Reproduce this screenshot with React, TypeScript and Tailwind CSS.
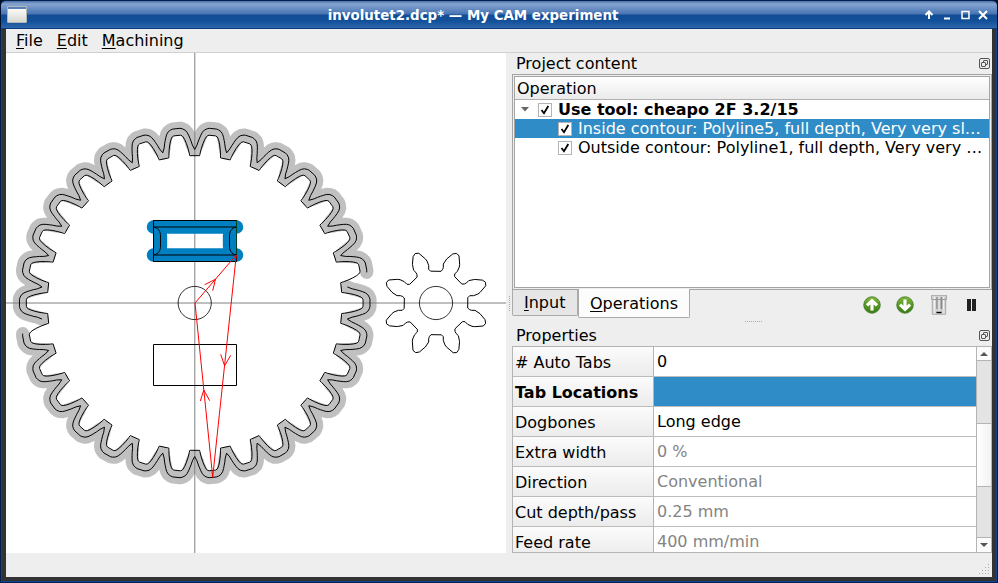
import React from "react";

type Polar = [number, number];

const CX = 194.7;
const CY = 303;

function polar(r: number, deg: number): string {
  const a = (deg * Math.PI) / 180;
  return `${(CX + r * Math.sin(a)).toFixed(2)},${(CY - r * Math.cos(a)).toFixed(2)}`;
}

// Half tooth profiles: [radius, angle from the tooth's axis], root first.
const toothProfile: Polar[] = [[147.4, 4.1], [150, 3.9], [155, 3.5], [160, 2.98], [164, 2.45], [166.5, 2], [167.7, 1.65], [168.4, 1.1]];
const cutProfile: Polar[] = [[153.5, 6], [158, 5.15], [162, 4.7], [165, 4.3], [168, 3.9], [171, 3.4], [173.3, 2.75], [174.7, 1.9], [175.3, 1.2]];

function tooth(profile: Polar[], axis: number): string[] {
  const rising = profile.map(([r, a]) => polar(r, axis - a));
  const falling = [...profile].reverse().map(([r, a]) => polar(r, axis + a));
  return [...rising, ...falling];
}

const gearOutline = Array.from({ length: 30 }, (_, i) => tooth(toothProfile, 6 + 12 * i)).flat().join(" ");

// Half of the cut, from the valley at `start` to the holding tab 14 teeth later.
function cutPath(start: number): string {
  const pts: string[] = [];
  for (let i = 0; i < 14; i++) pts.push(...tooth(cutProfile, start + 6 + 12 * i));
  const last = start + 6 + 12 * 14;
  pts.push(...cutProfile.map(([r, a]) => polar(r, last - a)));
  pts.push(polar(175.2, last + 1.2), polar(174.7, last + 1.9));
  return pts.join(" ");
}
const cuts = [cutPath(84), cutPath(264)];

const pinionTooth: Polar[] = [[15, -95], [20, -101], [22, -107], [22, -117], [32, -132], [50, -147], [61, -149], [69, -142], [71, -116], [70, -108], [64, -95], [56, -87], [56, -79]];
const pinion = Array.from({ length: 8 }, (_, i) => {
  const a = (i * Math.PI) / 4;
  return pinionTooth.map(([x, y]) => {
    const px = 436 + (x * Math.cos(a) - y * Math.sin(a)) / 3;
    const py = 303 + (x * Math.sin(a) + y * Math.cos(a)) / 3;
    return `${px.toFixed(2)},${py.toFixed(2)}`;
  });
}).flat().join(" ");

const pocket = "M153.5 227H236.5M236.5 227C231 228 229.5 232 229.5 236V246C229.5 250 231 254 236.5 255M236.5 255H153.5M153.5 255C159 254 160.5 250 160.5 246V236C160.5 232 159 228 153.5 227";

function Drawing() {
  return (
    <svg className="block h-[500px] w-[500px] shrink-0 bg-white" viewBox="6 53 500 500" fill="none">
      {cuts.map((c) => (
        <polyline key={c} points={c} stroke="#c0c0c0" strokeWidth="13.2" strokeLinecap="round" strokeLinejoin="round" />
      ))}
      <path d="M6 303H506M194.8 53V553" stroke="#808080" />
      <path d={pocket} stroke="#0080c0" strokeWidth="13.4" strokeLinecap="round" strokeLinejoin="round" />
      <path d={pocket} stroke="#000" />
      {cuts.map((c) => (
        <polyline key={c} points={c} stroke="#000" strokeWidth="1" />
      ))}
      <polygon points={gearOutline} stroke="#000" strokeWidth="1" />
      <polygon points={pinion} stroke="#000" strokeWidth="1" />
      <path d="M153.5 220.5H236.5V261.5H153.5ZM153.5 344.5H236.5V385.5H153.5Z" stroke="#000" />
      <path d="M236.5 221V255" stroke="#004020" />
      <circle cx="194.7" cy="303" r="16.6" stroke="#000" strokeWidth=".8" />
      <circle cx="436" cy="303" r="16.6" stroke="#000" strokeWidth=".8" />
      <path
        d="M195 303L236.3 255L212.7 477.2L195 303M204.7 284.7L215.5 279.2L212.7 290.7M220.7 354.3L224.6 365.8L230.7 355.3M200.3 401L203.8 390L209.7 400.7"
        stroke="#f00"
      />
    </svg>
  );
}

function DockTitle({ children }: { children: React.ReactNode }) {
  return (
    <div className="flex h-[21px] items-center justify-between pl-1 pr-[2px]">
      <span>{children}</span>
      <svg width="11" height="11" viewBox="0 0 11 11" fill="none" stroke="#555">
        <rect x=".5" y=".5" width="10" height="10" rx="1.5" />
        <rect x="4.5" y="2.5" width="4" height="4" rx=".5" />
        <rect x="2.5" y="4.5" width="4" height="4" rx=".5" fill="#eee" />
      </svg>
    </div>
  );
}

function Check() {
  return (
    <span className="flex h-[14px] w-[14px] shrink-0 items-center justify-center border border-[#b4b4b4] bg-white">
      <svg width="10" height="10" viewBox="0 0 10 10" fill="none" stroke="#000" strokeWidth="1.8">
        <path d="M1.5 5L4 8.2L8.3 1" />
      </svg>
    </span>
  );
}

function Arrow({ up }: { up?: boolean }) {
  return (
    <svg width="18" height="18" viewBox="0 0 18 18">
      <defs>
        <linearGradient id="leaf" x2="0" y2="1">
          <stop stopColor="#7db83a" />
          <stop offset="1" stopColor="#357a14" />
        </linearGradient>
      </defs>
      <circle cx="9" cy="9" r="8.3" fill="url(#leaf)" stroke="#3b711c" strokeWidth=".7" />
      <path
        transform={up ? undefined : "rotate(180 9 9)"}
        d="M9 5V14.5M4 9.3L9 4.6L14 9.3"
        fill="none"
        stroke="#fff"
        strokeWidth="3.2"
      />
    </svg>
  );
}

function Trash() {
  return (
    <svg width="16" height="20" viewBox="0 0 16 20">
      <defs>
        <linearGradient id="can">
          <stop stopColor="#bbb" />
          <stop offset=".2" stopColor="#fafafa" />
          <stop offset=".35" stopColor="#888" />
          <stop offset=".5" stopColor="#f4f4f4" />
          <stop offset=".68" stopColor="#888" />
          <stop offset=".82" stopColor="#f2f2f2" />
          <stop offset="1" stopColor="#aaa" />
        </linearGradient>
      </defs>
      <path d="M1 2H15L14.5 19H1.5Z" fill="url(#can)" />
      <path d="M1 14H15V19H1Z" fill="#ddd" opacity=".75" />
      <path d="M0 .8H16M.5 4.5H15.5" stroke="#999" />
      <path d="M.5 1V4.5M15.5 1V4.5M1.3 4V19.3H14.7V4" fill="none" stroke="#aaa" />
      <path d="M5.5 17.5H10.5" stroke="#000" strokeWidth="1.4" />
    </svg>
  );
}

const properties = [
  { name: "# Auto Tabs", value: "0" },
  { name: "Tab Locations", value: "", selected: true },
  { name: "Dogbones", value: "Long edge" },
  { name: "Extra width", value: "0 %", muted: true },
  { name: "Direction", value: "Conventional", muted: true },
  { name: "Cut depth/pass", value: "0.25 mm", muted: true },
  { name: "Feed rate", value: "400 mm/min", muted: true },
];

function Scrollbar() {
  return (
    <div className="flex w-[16px] flex-col border-x border-[#b4b4b4] bg-[#e4e4e4]">
      <div className="flex h-[14px] items-center justify-center border-b border-[#b4b4b4] bg-[#fbfbfb]">
        <svg width="8" height="4"><path d="M0 4L4 0L8 4Z" fill="#555" /></svg>
      </div>
      <div className="h-[62px]" />
      <div className="h-[64px] border-y border-[#b4b4b4] bg-linear-to-r from-white to-[#f2f2f2]" />
      <div className="flex-1" />
      <div className="flex h-[15px] items-center justify-center border-t border-[#b4b4b4] bg-[#fbfbfb] pb-px">
        <svg width="8" height="4"><path d="M0 0L4 4L8 0Z" fill="#555" /></svg>
      </div>
    </div>
  );
}

function TitleBar() {
  return (
    <div className="flex h-[29px] items-center rounded-t-[5px] border-t border-[#00204f] border-b border-b-[#0a3a80] bg-[linear-gradient(#4a70a8_0px,#86a5d0_3px,#4774b3_13px,#124c94_14px,#12509a_20px,#2f66ab_27px)] pl-[6px] pr-[7px]">
      <svg width="20" height="17" viewBox="0 0 20 17">
        <defs>
          <linearGradient id="sheet" x2="0" y2="1">
            <stop stopColor="#fff" />
            <stop offset="1" stopColor="#d8d8d0" />
          </linearGradient>
        </defs>
        <rect x=".5" y=".5" width="19" height="16" rx=".5" fill="url(#sheet)" stroke="#b4b8b8" />
        <path d="M1 2H19" stroke="#5580bc" strokeWidth="2" />
      </svg>
      <div className="flex-1 pr-[5px] pt-px text-center text-[13.4px] font-bold text-white">involutet2.dcp* — My CAM experiment</div>
      <svg width="66" height="12" viewBox="0 0 66 12" fill="none" stroke="#fff" strokeWidth="2">
        <path d="M5 10V3M1.5 6L5 2.5L8.5 6" />
        <path d="M20 9.5H26" />
        <path d="M38 2.5H45V9.5H38Z" strokeWidth="1.5" />
        <path d="M55 2L63 10M63 2L55 10" />
      </svg>
    </div>
  );
}

export default function App() {
  return (
    <div
      className="flex h-[583px] w-[998px] flex-col overflow-hidden bg-[#0d4186] text-[16px] leading-[19px] text-black"
      style={{ fontFamily: '"DejaVu Sans", sans-serif' }}
    >
      <div className="bg-[#00102c] px-px">
        <TitleBar />
      </div>
      <div className="flex h-[554px] flex-col border border-t-0 border-[#00204f] bg-[#0f4590] px-px pb-px">
        <div className="flex h-[552px] flex-col bg-[#333] px-1 pb-1">
          <div className="flex h-[548px] flex-col bg-[#eee]">
            <div className="flex h-6 gap-[14px] border-b border-[#d0d0d0] pl-[10px] pt-[2px]">
              {["File", "Edit", "Machining"].map((m) => (
                <span key={m}><u className="underline-offset-2">{m[0]}</u>{m.slice(1)}</span>
              ))}
            </div>

            <div className="flex h-[500px]">
              <Drawing />
              <div className="flex w-[6px] items-center justify-center">
                <div className="h-[15px] border-l border-dotted border-[#aaa]" />
              </div>

              <div className="flex w-[480px] flex-col">
                <DockTitle>Project content</DockTitle>
                <div className="h-[216px] border border-[#a4a4a4] p-px">
                  <div className="flex h-full flex-col border border-[#a4a4a4] bg-white">
                    <div className="h-[23px] border-b border-[#b0b0b0] bg-linear-to-b from-white to-[#ebebeb] pl-[2px] pt-[2px]">Operation</div>
                    <div className="flex h-[19px] items-center pl-[6px] font-bold">
                      <svg width="8" height="5" className="mr-[9px]"><path d="M0 0H8L4 4.5Z" fill="#666" /></svg>
                      <Check />
                      <span className="pl-[6px]">Use tool: cheapo 2F 3.2/15</span>
                    </div>
                    <div className="flex h-[19px] items-center whitespace-nowrap bg-[#308cc6] pl-[43px] text-white">
                      <Check />
                      <span className="pl-[6px]">Inside contour: Polyline5, full depth, Very very sl…</span>
                    </div>
                    <div className="flex h-[19px] items-center whitespace-nowrap pl-[43px]">
                      <Check />
                      <span className="pl-[6px]">Outside contour: Polyline1, full depth, Very very …</span>
                    </div>
                  </div>
                </div>

                <div className="flex h-[31px] items-start">
                  <div className="h-[26px] w-[66px] rounded-b-[2px] border border-t-0 border-[#aaa] bg-[#e6e6e6] pl-[11px] pt-[3px]">
                    <u className="underline-offset-2">I</u>nput
                  </div>
                  <div className="-mt-px h-[29px] w-[112px] rounded-b-[2px] border border-t-0 border-[#aaa] bg-[#fcfcfc] pl-[11px] pt-[5px]">
                    <u className="underline-offset-2">O</u>perations
                  </div>
                  <div className="ml-auto flex items-center pr-[16px] pt-[5px]">
                    <Arrow up />
                    <span className="ml-[15px]"><Arrow /></span>
                    <span className="ml-[17px]"><Trash /></span>
                    <span className="ml-5 h-3 w-1 bg-[#222]" />
                    <span className="ml-px h-3 w-1 bg-[#222]" />
                  </div>
                </div>
                <div className="flex h-[4px] items-start justify-center pl-[2px]">
                  <div className="w-[17px] border-t border-dotted border-[#aaa]" />
                </div>
                <DockTitle>Properties</DockTitle>
                <div className="flex h-[207px] w-[480px] border-y border-l border-[#b4b4b4]">
                  <div className="flex w-[463px] flex-col overflow-hidden bg-white">
                    {properties.map((p) => (
                      <div key={p.name} className="flex h-[30px] shrink-0 border-b border-[#bcbcbc]">
                        <div className={"w-[141px] border-r border-[#b4b4b4] bg-linear-to-b from-[#fbfbfb] to-[#ececec] pl-[2px] pt-[6px]" + (p.selected ? " font-bold" : "")}>
                          {p.name}
                        </div>
                        <div className={"flex-1 pl-[3px] pt-[5px]" + (p.selected ? " bg-[#308cc6]" : "") + (p.muted ? " text-[#848484]" : "")}>
                          {p.value}
                        </div>
                      </div>
                    ))}
                  </div>
                  <Scrollbar />
                </div>
              </div>
            </div>

            <div className="flex flex-1 items-end justify-end p-[2px]">
              <svg width="11" height="11" fill="#aaa">
                {[0, 1, 2, 3].map((r) =>
                  Array.from({ length: r + 1 }, (_, i) => (
                    <rect key={`${r}-${i}`} x={9 - i * 3} y={r * 3} width="1" height="1" />
                  )),
                )}
              </svg>
            </div>
          </div>
        </div>
      </div>
    </div>
  );
}
